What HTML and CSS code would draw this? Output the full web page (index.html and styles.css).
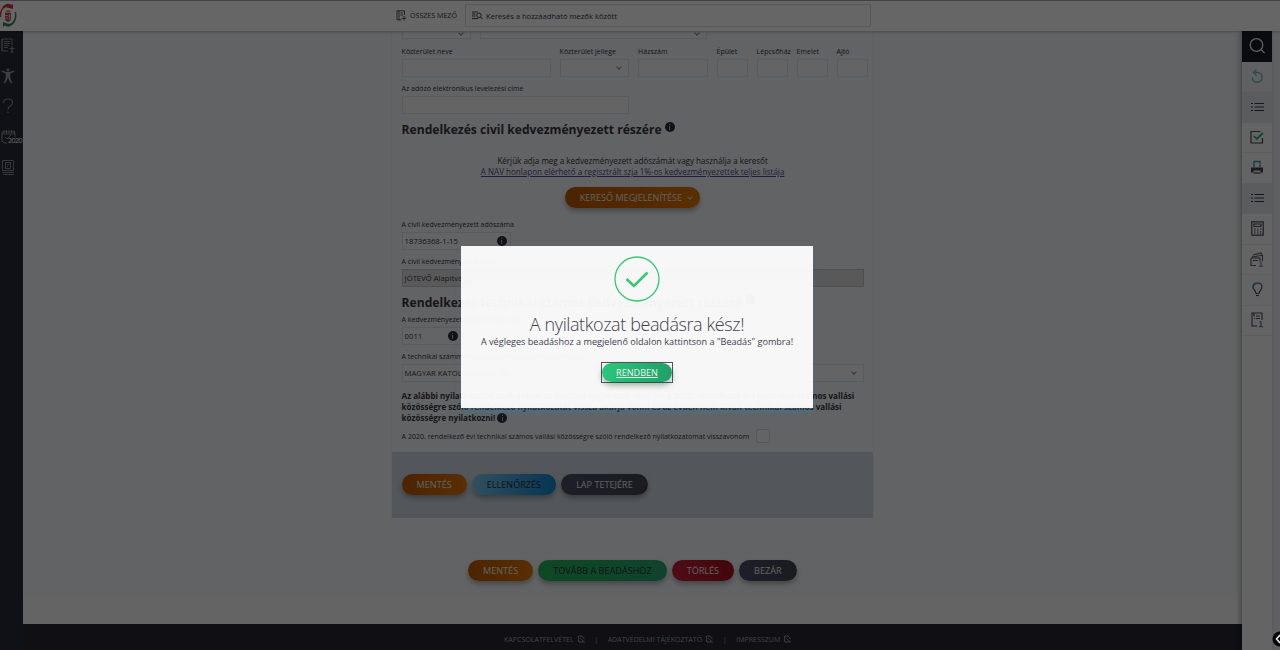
FILE: index.html
```html
<!DOCTYPE html>
<html lang="hu">
<head>
    <meta charset="UTF-8">
    <title>Rendelkező nyilatkozat</title>
    <link rel="stylesheet" href="styles.css">
</head>
<body>
<div class="page">
    <header class="topbar">
        <div class="logo">
            <svg width="18" height="26" viewBox="0 0 18 26" fill="none">
                <path d="M0.5 15C0 9 3 4 8 3.500L12 5" stroke="#d8343c" stroke-width="1.400"/>
                <path d="M2 5.500C5 1.500 9 1 11.500 3L13 2v5l-4-1C7 5 4 5 2 5.500z" fill="#d8343c"/>
                <path d="M15.500 10C16.500 17 14 22 8 23.500L3 22" stroke="#2f8a5c" stroke-width="1.400"/>
                <path d="M14 21c-3 4-7 4.500-9 2.500L3 25v-5l4 1.500c2 .8 5 .5 7-.5z" fill="#2f8a5c"/>
                <path d="M5 11h6v6q0 2-3 3q-3-1-3-3z" fill="#c9444a"/>
                <path d="M5 13.500h3M5 16h3M9.500 12v6M8.500 14h2" stroke="#eee" stroke-width=".8"/>
                <path d="M5.500 10.500V9Q8 7 10.500 9v1.500z" fill="#b99b62"/>
            </svg>
        </div>
        <div class="search">
            <div class="all-fields">
                <svg width="11" height="11" viewBox="0 0 11 11" fill="none" stroke="#444" stroke-width=".9">
                    <path d="M8.500 5V.8H1v9h4.500M3 .8v9M4.500 3H7M4.500 5H7M8 6v4.500M5.800 8.300h4.500"/>
                </svg>
                <span>ÖSSZES MEZŐ</span>
            </div>
            <div class="search-input">
                <svg width="11" height="9" viewBox="0 0 11 9" fill="none" stroke="#333" stroke-width=".9">
                    <path d="M0 1h6M0 3h3.500M0 5h3.500M0 7.500h6"/><circle cx="7" cy="4.300" r="2.200"/><path d="M8.600 6l2 2.200"/>
                </svg>
                <span>Keresés a hozzáadható mezők között</span>
            </div>
        </div>
    </header>

    <div class="middle">
        <nav class="sidebar">
            <a><svg width="14" height="15" viewBox="0 0 14 15" fill="none" stroke="#888a92" stroke-width="1">
                <path d="M11 7V1H1v12h6M1 1v12M3 3.500h6M3 5.500h6M3 7.500h5M3 9.500h4"/><circle cx="11" cy="9" r=".6"/><path d="M8.500 10.500h5M11 10.500v2l-1.200 2.500M11 12.500l1.200 2.500"/>
            </svg></a>
            <a><svg width="14" height="16" viewBox="0 0 14 16" fill="#9c9da3">
                <circle cx="7" cy="1.900" r="1.400"/><path d="M1 2.500l4.500 1.600h3L13 2.500l.4 1L9.200 5.800v3.500l1.800 6-1 .3-3-5.600-3 5.600-1-.3 1.800-6V5.800L.6 3.500z"/>
            </svg></a>
            <a><svg width="14" height="16" viewBox="0 0 14 16" fill="none" stroke="#8a8b92" stroke-width="1.200">
                <path d="M2.500 5Q2.500 1 7 1t4.500 3.500Q11.500 7 9 8.200 7 9.200 7 11.500M7 13.500V15"/>
            </svg></a>
            <a class="year"><svg width="15" height="15" viewBox="0 0 15 15" fill="none" stroke="#888a92" stroke-width="1">
                <path d="M1 13V3h13v5M1 5h13M3 1v3M5.500 1v3M8 1v3M10.500 1v3M13 1v3M4 8l2 2 4-4M1 12l2 2h3"/>
            </svg><span>2020</span></a>
            <a><svg width="14" height="16" viewBox="0 0 14 16" fill="none" stroke="#888a92" stroke-width="1">
                <path d="M1.500 1.500h11v10h-11zM4.500 3.500h5v6h-5zM6 5.500h2M6 7.500h1M1 13.500h12M2 15.500h11"/>
            </svg></a>
        </nav>

        <main class="content">
            <section class="form">
                <div class="row row-cut">
                    <div class="select w70"><i></i></div>
                    <div class="select w227"><i></i></div>
                </div>
                <div class="row">
                    <label class="field w149">Közterület neve<span class="input"></span></label>
                    <label class="field w70">Közterület jellege<span class="input select"><i></i></span></label>
                    <label class="field w70">Házszám<span class="input"></span></label>
                    <label class="field w31">Épület<span class="input"></span></label>
                    <label class="field w31">Lépcsőház<span class="input"></span></label>
                    <label class="field w31">Emelet<span class="input"></span></label>
                    <label class="field w31">Ajtó<span class="input"></span></label>
                </div>
                <div class="row">
                    <label class="field w227">Az adózó elektronikus levelezési címe<span class="input"></span></label>
                </div>

                <h2>Rendelkezés civil kedvezményezett részére <b class="info"></b></h2>
                <div class="hint">
                    <p>Kérjük adja meg a kedvezményezett adószámát vagy használja a keresőt</p>
                    <a>A NAV honlapon elérhető a regisztrált szja 1%-os kedvezményezettek teljes listája</a>
                </div>
                <div class="finder"><button class="btn orange">KERESŐ MEGJELENÍTÉSE <i></i></button></div>

                <div class="row">
                    <label class="field w109">A civil kedvezményezett adószáma<span class="input">18736368-1-15 <b class="info"></b></span></label>
                </div>
                <div class="row">
                    <label class="field full">A civil kedvezményezett neve<span class="input disabled">JÓTEVŐ Alapítvány</span></label>
                </div>

                <h2 class="second">Rendelkezés technikai számos kedvezményezett részére <b class="info"></b></h2>
                <div class="row">
                    <label class="field w60">A kedvezményezett technikai száma<span class="input">0011 <b class="info"></b></span></label>
                </div>
                <div class="row">
                    <label class="field full">A technikai számmal rendelkező kedvezményezett neve<span class="input select">MAGYAR KATOLIKUS EGYHÁZ<i></i></span></label>
                </div>

                <p class="notice">Az alábbi nyilatkozatot csak abban az esetben tegye csak meg, ha a 2020. rendelkező évi technikai számos vallási<br>
                    közösségre szóló rendelkező nyilatkozatát vissza akarja vonni és az évben nem kíván technikai számos vallási<br>
                    közösségre nyilatkozni! <b class="info"></b></p>
                <div class="revoke">
                    <span>A 2020. rendelkező évi technikai számos vallási közösségre szóló rendelkező nyilatkozatomat visszavonom</span>
                    <span class="check"></span>
                </div>
                <div class="form-buttons">
                    <button class="btn orange">MENTÉS</button>
                    <button class="btn blue">ELLENŐRZÉS</button>
                    <button class="btn gray">LAP TETEJÉRE</button>
                </div>
            </section>
            <div class="page-buttons">
                <button class="btn orange">MENTÉS</button>
                <button class="btn green">TOVÁBB A BEADÁSHOZ</button>
                <button class="btn red">TÖRLÉS</button>
                <button class="btn gray">BEZÁR</button>
            </div>
            <footer class="footer">
                <a>KAPCSOLATFELVÉTEL <svg width="7" height="8" viewBox="0 0 7 8"><path d="M3 7H.7V1H4l2 2v1M2.500 3.500l4 3.500H3"/></svg></a>
                <em>|</em>
                <a>ADATVÉDELMI TÁJÉKOZTATÓ <svg width="7" height="8" viewBox="0 0 7 8"><path d="M3 7H.7V1H4l2 2v1M2.500 3.500l4 3.500H3"/></svg></a>
                <em>|</em>
                <a>IMPRESSZUM <svg width="7" height="8" viewBox="0 0 7 8"><path d="M3 7H.7V1H4l2 2v1M2.500 3.500l4 3.500H3"/></svg></a>
            </footer>
        </main>

        <aside class="tools">
            <a class="dark"><svg width="18" height="18" viewBox="0 0 18 18" fill="none" stroke="#eee" stroke-width="1.300"><circle cx="8.500" cy="8" r="6.300"/><path d="M13 12.500l3.500 3.500"/></svg></a>
            <a class="pale"><svg width="14" height="16" viewBox="0 0 14 16" fill="none" stroke="#7cbcc0" stroke-width="1.500"><path d="M4 4.500H7.500A4.900 4.900 0 1 1 2.300 9.500M6.500 1.500L3.500 4.500 6.500 7.500"/></svg></a>
            <a class="group"><svg width="13" height="10" viewBox="0 0 13 10" stroke="#3b3c48" stroke-width="1.100"><path d="M0 1.500h2M3.500 1.500H13M0 5h2M3.500 5H13M0 8.500h2M3.500 8.500H13"/></svg></a>
            <a><svg width="14" height="14" viewBox="0 0 14 14" fill="none" stroke="#4a4b58" stroke-width="1.200"><path d="M10.500 1.500H1v11.500h11.500V8"/><path d="M4 6l2.800 3 6-6" stroke="#27b563" stroke-width="1.800"/></svg></a>
            <a><svg width="14" height="15" viewBox="0 0 14 15" fill="none"><path d="M4 7V1.500h6V7" stroke="#3f94ad" stroke-width="1.300"/><path d="M1 7.500h12v5h-2.500v-2h-7v2H1z" fill="#41424f"/><path d="M3.500 13h7" stroke="#41424f" stroke-width="1.200"/></svg></a>
            <a class="group"><svg width="13" height="10" viewBox="0 0 13 10" stroke="#3b3c48" stroke-width="1.200"><path d="M0 1.500h2M3.500 1.500H13M0 5h2M3.500 5H13M0 8.500h2M3.500 8.500H13"/></svg></a>
            <a><svg width="13" height="15" viewBox="0 0 13 15" fill="none" stroke="#4a4b58" stroke-width="1.200"><path d="M.8.800h11.400v13.400H.8zM3 3h7v2.500H3z"/><path d="M3 8h1.500M6 8h1.500M9 8h1.500M3 10h1.500M6 10h1.500M3 12h1.500M6 12h1.500"/><path d="M9.700 10v3" stroke="#3f94ad"/></svg></a>
            <a><svg width="14" height="15" viewBox="0 0 14 15" fill="none" stroke="#5a5b66" stroke-width="1.100"><path d="M3 3l8-2 1 2M2 5l9-1.500h1.500V9M1 6h9v3M1 6v7.500h5M3 8.500h5"/><path d="M9.500 10h1.500v4M9 14.200h4" stroke="#3f94ad"/></svg></a>
            <a><svg width="11" height="15" viewBox="0 0 11 15" fill="none" stroke="#4a4b58" stroke-width="1.100"><path d="M4 11.500Q3.800 9.500 2.300 8 1 6.500 1 5 1 1 5.500 1T10 5q0 1.500-1.300 3Q7.200 9.500 7 11.500z"/><path d="M4 13.500h3"/><path d="M1.300 6.500Q.5 2 4.500 1.200" stroke="#3f94ad" stroke-width="1.600"/></svg></a>
            <a><svg width="13" height="16" viewBox="0 0 13 16" fill="none" stroke="#4a4b58" stroke-width="1.100"><path d="M11 8V1H1v13h5M3 1v3M3 4h1M5 4h4M5 6.500h4M3 6.500h1"/><path d="M8.500 10H10v4.500M8 14.700h4" stroke="#3f94ad" stroke-width="1.300"/></svg></a>
        </aside>
        <div class="scroll"></div>
    </div>
</div>

<div class="overlay">
    <div class="modal">
        <svg class="ok" width="46" height="46" viewBox="0 0 46 46" fill="none" stroke="#36c873">
            <circle cx="23" cy="23" r="22" stroke-width="1.300"/>
            <path d="M12.500 23l7.500 7L33.500 16.500" stroke-width="2.600"/>
        </svg>
        <h1>A nyilatkozat beadásra kész!</h1>
        <p>A végleges beadáshoz a megjelenő oldalon kattintson a "Beadás" gombra!</p>
        <div class="focus"><button class="btn confirm">RENDBEN</button></div>
    </div>
    <svg class="pointer" width="8" height="16" viewBox="0 0 8 16"><circle cx="8" cy="8" r="7.500" fill="#000"/><path d="M8 4L4.500 8 8 12" stroke="#eee" stroke-width="1.500" fill="none"/></svg>
</div>
</body>
</html>
```
FILE: styles.css
```css
* {
    box-sizing: border-box;
}
body {
    margin: 0;
    font-family: "Open Sans", "Noto Sans", sans-serif;
    font-size: 7px;
    color: #383942;
    overflow: hidden;
}
h1, h2, p {
    margin: 0;
}
.page {
    display: flex;
    flex-direction: column;
    height: 650px;
    background: #f5f7f9;
}

/* top bar */
.topbar {
    display: flex;
    height: 31px;
    flex: none;
    background: #fff;
    border-top: 1px solid #a5a5aa;
    box-shadow: 0 1px 3px rgba(0,0,0,.25);
    position: relative;
    z-index: 2;
}
.logo {
    width: 391px;
    padding-top: 1px;
}
.search {
    display: flex;
    align-items: center;
    height: 28px;
}
.all-fields {
    display: flex;
    align-items: center;
    gap: 3px;
    width: 74px;
    padding-left: 5px;
    font-size: 7.1px;
    white-space: nowrap;
}
.search-input {
    display: flex;
    align-items: center;
    gap: 3px;
    width: 406px;
    height: 23px;
    padding-left: 6px;
    margin-top: 1px;
    border: 1px solid #dcdcdf;
    font-size: 7.6px;
}

.middle {
    display: flex;
    flex: 1;
    min-height: 0;
}

/* left menu */
.sidebar {
    width: 23px;
    background: #2a2b37;
}
.sidebar a {
    display: flex;
    align-items: center;
    height: 30.400px;
    padding: 0 0 1px 1px;
}
.year {
    position: relative;
}
.year span {
    position: absolute;
    left: 8px;
    top: 14px;
    font-size: 7px;
    letter-spacing: -.5px;
    color: #fff;
}

/* form */
.content {
    flex: 1;
    display: flex;
    flex-direction: column;
    min-width: 0;
    overflow: hidden;
}
.form {
    flex: none;
    width: 483px;
    height: 487px;
    margin-left: 368px;
    padding-left: 9.600px;
    border-left: 1px solid #eceef1;
    border-right: 1px solid #eceef1;
}
.row {
    display: flex;
    gap: 9px;
    height: 37px;
}
.row-cut {
    height: 15px;
    margin-top: -2px;
}
.row-cut .select {
    height: 10px;
    border: 1px solid #e1e3e6;
    background: #f9fafb;
}
.field {
    display: block;
    white-space: nowrap;
    font-size: 7px;
    line-height: 15px;
}
.input {
    display: flex;
    align-items: center;
    height: 18px;
    padding: 0 3px 0 2px;
    background: #f9fafb;
    border: 1px solid #e1e3e6;
    font-size: 7.7px;
}
.input .info {
    margin-left: auto;
}
.disabled {
    background: #dedfe2;
    border-color: #c4c6ca;
}
.select {
    display: flex;
    align-items: center;
    justify-content: flex-end;
    padding-right: 7px;
}
.full .select {
    justify-content: space-between;
}
.select i, .btn i {
    display: inline-block;
    width: 4px;
    height: 4px;
    border-right: 1px solid #888;
    border-bottom: 1px solid #888;
    transform: translateY(-1px) rotate(45deg);
}
.w31 { width: 31px; }
.w60 { width: 60px; }
.w70 { width: 69.500px; }
.w109 { width: 109px; }
.w149 { width: 149px; }
.w227 { width: 227px; }
.full { width: 462.500px; }
h2 {
    height: 36px;
    padding-top: 2px;
    font-size: 12.100px;
    line-height: 20px;
    white-space: nowrap;
}
h2.second {
    height: 21px;
}
/* dark dot with a small "i" drawn from two bars */
.info {
    display: inline-block;
    flex: none;
    width: 10px;
    height: 10px;
    border-radius: 50%;
    background: linear-gradient(#b9b9c0, #b9b9c0) 50% 2px / 1px 1px no-repeat,
        linear-gradient(#b9b9c0, #b9b9c0) 50% 4px / 1px 4px no-repeat,
        #2e2f3e;
}
h2 .info {
    vertical-align: 2px;
}
.notice .info {
    vertical-align: -2px;
}
.hint {
    padding-top: 1px;
    height: 33px;
    width: 462px;
    font-size: 8.050px;
    line-height: 11px;
    text-align: center;
}
.hint a {
    color: #5a4aa0;
    text-decoration: underline;
}
.finder {
    width: 462px;
    height: 30px;
    text-align: center;
}

/* buttons */
.btn {
    height: 21px;
    padding: 0 15px;
    border: 0;
    border-radius: 11px;
    font-family: inherit;
    font-size: 9.100px;
    line-height: 21px;
    color: #f0f0f0;
    white-space: nowrap;
    box-shadow: 0 3px 5px rgba(0,0,0,.3);
}
.orange { background: linear-gradient(90deg, #bb5a00, #e07600); }
.blue { background: linear-gradient(100deg, #7ec8ee, #0b86cf); color: #2c2d36; }
.green { background: linear-gradient(90deg, #22b458, #28a873); color: #2c2d36; }
.red { background: linear-gradient(90deg, #c4203c, #a60f1c); }
.gray { background: linear-gradient(90deg, #4b4c68, #43454f); }
.finder .btn {
    padding-right: 8px;
}
.btn i {
    margin: 0 0 1px 4px;
    border-color: #ddd;
}

.notice {
    height: 39px;
    padding-top: 4px;
    font-size: 8.050px;
    line-height: 11px;
    font-weight: bold;
    white-space: nowrap;
}
.revoke {
    display: flex;
    align-items: center;
    gap: 7px;
    height: 27px;
    padding-bottom: 6px;
    font-size: 7.050px;
    white-space: nowrap;
}
.check {
    width: 14px;
    height: 14px;
    border: 1px solid #d8dade;
    border-radius: 2px;
    background: #f9fafb;
}
.form-buttons {
    display: flex;
    align-items: center;
    gap: 5px;
    height: 65.500px;
    margin-left: -9.600px;
    padding-left: 9.600px;
    background: #d0d8e0;
}
.page-buttons {
    display: flex;
    flex: 1;
    gap: 5px;
    padding: 42px 0 0 445px;
    background: linear-gradient(#f5f7f9 76px, #fafafb 76px);
}
.footer {
    display: flex;
    flex: none;
    align-items: center;
    height: 26px;
    padding: 4px 0 0 481px;
    background: #262732;
    color: #a4a5ad;
    font-size: 7.050px;
}
.footer a {
    display: flex;
    align-items: center;
    gap: 4px;
}
.footer em {
    width: 23px;
    text-align: center;
    font-style: normal;
}
.footer svg {
    fill: none;
    stroke: #b4b5bd;
    stroke-width: .8;
}

/* right tools */
.tools {
    width: 30px;
    background: #fafafc;
    box-shadow: -2px 0 5px rgba(0,0,0,.3);
    z-index: 1;
}
.tools a {
    display: flex;
    align-items: center;
    justify-content: center;
    height: 30.500px;
    border-bottom: 1px solid #e9eaee;
}
.tools .dark {
    background: #1b1c28;
    border: 0;
}
.tools .pale {
    background: #f1f3f6;
}
.tools .group {
    background: #e4e6ea;
}
.scroll {
    width: 8px;
    background: #eff1f4;
}

/* modal */
.overlay {
    position: absolute;
    left: 0;
    top: 0;
    width: 1280px;
    height: 650px;
    z-index: 5;
    background: rgba(0,0,0,.6);
}
.modal {
    position: absolute;
    left: 461px;
    top: 246px;
    width: 352px;
    height: 162px;
    padding-top: 10px;
    display: flex;
    flex-direction: column;
    align-items: center;
    background: rgba(253,253,253,.96);
    box-shadow: 0 5px 6px rgba(60,130,170,.3);
    color: #40414d;
}
.ok {
    flex: none;
}
.modal h1 {
    margin-top: 10px;
    font-size: 18px;
    line-height: 24px;
    font-weight: 300;
    letter-spacing: -.4px;
    white-space: nowrap;
}
.modal p {
    font-size: 9.100px;
    line-height: 12px;
    white-space: nowrap;
}
.focus {
    margin-top: 14px;
    height: 21px;
    border: 1px solid #555;
    background: #fff;
}
.confirm {
    display: block;
    height: 19px;
    padding: 0 14px;
    line-height: 19px;
    background: linear-gradient(100deg, #2bc77c, #1f9e68);
    text-decoration: underline;
    box-shadow: 0 3px 6px rgba(0,60,30,.4);
}
.pointer {
    position: absolute;
    right: 0;
    top: 631px;
}
```
